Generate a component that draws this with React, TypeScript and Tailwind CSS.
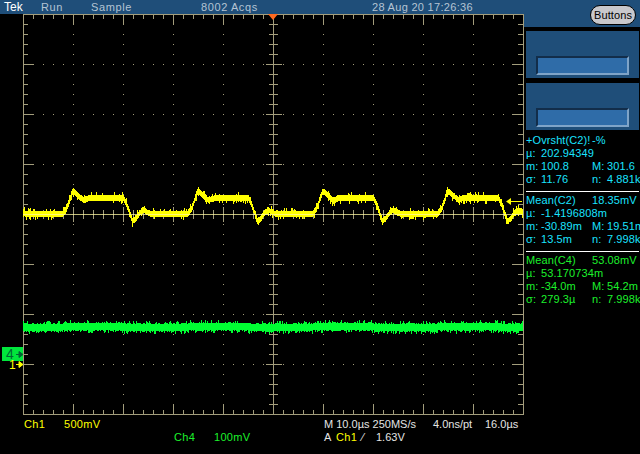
const GRID = "#a39d7c";

// small seeded noise so the trace is the same on every load
function makeNoise(seed: number) {
  let s = seed;
  return () => {
    s = (s * 16807) % 2147483647;
    return s / 2147483647;
  };
}

function lerpPoints(pts: number[][], p: number) {
  for (let i = 1; i < pts.length; i++) {
    if (p <= pts[i][0]) {
      const [x0, y0] = pts[i - 1];
      const [x1, y1] = pts[i];
      return y0 + ((y1 - y0) * (p - x0)) / (x1 - x0);
    }
  }
  return pts[pts.length - 1][1];
}

const pulse = [
  [0, 214], [4, 209], [10, 192], [12, 192], [16, 196], [21, 200], [27, 198], [61, 198],
  [64, 204], [70, 221], [73, 219], [77, 213], [81, 210], [88, 214], [125, 214],
];

function yellowTrace() {
  const r = makeNoise(77);
  let d = "";
  for (let x = 23; x < 523; x++) {
    const p = (((x - 62) % 125) + 125) % 125;
    const c = lerpPoints(pulse, p);
    const top = c - 2.5 - (r() < 0.2 ? 1 + r() * 3 : r());
    const bot = c + 2.5 + (r() < 0.2 ? 1 + r() * 3 : r());
    d += `M${x}.5 ${Math.round(top)}V${Math.round(bot)}`;
  }
  return d;
}

function greenTrace() {
  const r = makeNoise(4242);
  let d = "";
  for (let x = 23; x < 523; x++) {
    const p = (((x - 62) % 125) + 125) % 125;
    const c = 327.5 - (p > 0 && p < 62 ? 0.8 : 0);
    const top = c - 3.5 - (r() < 0.25 ? 1 + r() * 2.5 : r() * 0.8);
    const bot = c + 3.5 + (r() < 0.25 ? 1 + r() * 2.5 : r() * 0.8);
    d += `M${x}.5 ${Math.round(top)}V${Math.round(bot)}`;
  }
  return d;
}

function Graticule() {
  const ticks: string[] = [];
  const dots: string[] = [];
  for (let x = 33; x < 523; x += 10) {
    const major = (x - 23) % 50 === 0;
    ticks.push(`M${x}.5 15V${major ? 25 : 19}`);
    ticks.push(`M${x}.5 414V${major ? 404 : 410}`);
    ticks.push(`M${x}.5 ${major ? 207 : 210}V${major ? 222 : 219}`);
  }
  for (let y = 24; y < 414; y += 10) {
    const major = (y - 14) % 50 === 0;
    ticks.push(`M23 ${y}.5H${major ? 34 : 28}`);
    ticks.push(`M523 ${y}.5H${major ? 512 : 518}`);
    ticks.push(`M${major ? 266 : 269} ${y}.5H${major ? 282 : 278}`);
  }
  for (let gy = 64; gy < 414; gy += 50) {
    if (gy === 214) continue;
    for (let x = 33; x < 523; x += 10) dots.push(`M${x} ${gy}h1v1h-1z`);
  }
  for (let gx = 73; gx < 523; gx += 50) {
    if (gx === 273) continue;
    for (let y = 24; y < 414; y += 10) dots.push(`M${gx} ${y}h1v1h-1z`);
  }
  return (
    <g shapeRendering="crispEdges">
      <path d={dots.join("")} fill={GRID} />
      <path d={ticks.join("")} stroke={GRID} fill="none" />
      <path d="M23.5 14V414.5M23 14.5H523.5M23 414.5H524M523.5 14V414M273.5 14V414" stroke={GRID} fill="none" />
    </g>
  );
}

function Scope() {
  return (
    <svg width="524" height="416" viewBox="0 0 524 416" className="block shrink-0">
      <Graticule />
      <g shapeRendering="crispEdges" fill="none">
        <path d={yellowTrace()} stroke="#ffff00" />
        <path d={greenTrace()} stroke="#00ff33" />
        <path d="M23 214.5H523" stroke="#fff8a0" opacity="0.75" />
        {/* channel 1 ref arrow on the right */}
        <path d="M511 201.5H522" stroke="#ffff00" />
      </g>
      <path d="M506 201.5L511 198V205Z" fill="#ffff00" />
      <path d="M268 14H278L273 20Z" fill="#ff6a1f" />
      {/* channel markers */}
      <rect x="2" y="347" width="21" height="14" fill="#00e63c" />
      <path d="M16 354.5H20M19 351.5L23 354.5L19 357.5Z" stroke="#063" fill="#063" />
      <path d="M16 364.5H20M19 361.5L23 364.5L19 367.5Z" stroke="#ffff00" fill="#ffff00" />
    </svg>
  );
}

type Row = { a: string; b?: string; c?: string; d?: string };

function Readout({ rows, color }: { rows: Row[]; color: string }) {
  return (
    <div className={`px-[2px] ${color}`}>
      {rows.map((r, i) => (
        <div key={i} className="grid grid-cols-[66px_1fr] h-[13px] leading-[13px] whitespace-nowrap">
          <div className="flex">
            <span className="w-[15px] shrink-0">{r.a}</span>
            <span>{r.b}</span>
          </div>
          <div className="flex">
            <span className="w-[15px] shrink-0">{r.c}</span>
            <span>{r.d}</span>
          </div>
        </div>
      ))}
    </div>
  );
}

function HeaderRow({ label, value, color }: { label: string; value: string; color: string }) {
  return (
    <div className={`px-[2px] grid grid-cols-[66px_1fr] h-[13px] leading-[13px] whitespace-nowrap ${color}`}>
      <span>{label}</span>
      <span>{value}</span>
    </div>
  );
}

function SoftBox() {
  return (
    <div className="h-[47px] bg-[#1f4e79] ml-[2px] mr-[1px] pt-[25px] pl-[10px] pr-[10px]">
      <div className="h-[19px] bg-[#2f6ca8] border-t-2 border-l-2 border-[#122d4a] border-r-2 border-b-2 border-r-[#7fa4c8] border-b-[#7fa4c8]" />
    </div>
  );
}

function SidePanel() {
  return (
    <div className="w-[116px] shrink-0 overflow-hidden text-[11px] tracking-[0.1px]">
      <div className="h-[27px] bg-[#1f4e79] flex justify-end pt-[5px] pr-[4px]">
        <div className="w-[46px] h-[20px] rounded-[10px] bg-[#c8c8cc] border border-black flex items-center justify-center text-[11px] text-black">
          Buttons
        </div>
      </div>
      <div className="h-[4px]" />
      <SoftBox />
      <div className="h-[5px]" />
      <SoftBox />
      <div className="h-[4px]" />
      <HeaderRow label="+Ovrsht(C2)!" value="-%" color="text-[#19e3ff]" />
      <Readout
        color="text-[#19e3ff]"
        rows={[
          { a: "µ:", b: "202.94349" },
          { a: "m:", b: "100.8", c: "M:", d: "301.6" },
          { a: "σ:", b: "11.76", c: "n:", d: "4.881k" },
        ]}
      />
      <div className="h-[1px] bg-white mx-[2px] mt-[5px] mb-[2px] mr-[1px]" />
      <HeaderRow label="Mean(C2)" value="18.35mV" color="text-[#19e3ff]" />
      <Readout
        color="text-[#19e3ff]"
        rows={[
          { a: "µ:", b: "-1.4196808m" },
          { a: "m:", b: "-30.89m", c: "M:", d: "19.51m" },
          { a: "σ:", b: "13.5m", c: "n:", d: "7.998k" },
        ]}
      />
      <div className="h-[1px] bg-white mx-[2px] mt-[5px] mb-[2px] mr-[1px]" />
      <HeaderRow label="Mean(C4)" value="53.08mV" color="text-[#1cf02c]" />
      <Readout
        color="text-[#1cf02c]"
        rows={[
          { a: "µ:", b: "53.170734m" },
          { a: "m:", b: "-34.0m", c: "M:", d: "54.2m" },
          { a: "σ:", b: "279.3µ", c: "n:", d: "7.998k" },
        ]}
      />
    </div>
  );
}

export default function App() {
  return (
    <div className="relative w-[640px] h-[454px] overflow-hidden bg-black font-['Liberation_Sans',Arial,sans-serif] text-[11px]">
      {/* top status line */}
      <div className="h-[14px] bg-[#1f4e79] flex items-center text-[#b4c4d4] tracking-[0.6px] leading-[14px] whitespace-nowrap">
        <span className="w-[41px] pl-[4px] text-white text-[12px] tracking-normal">Tek</span>
        <span className="w-[50px]">Run</span>
        <span className="w-[110px]">Sample</span>
        <span className="w-[171px]">8002 Acqs</span>
        <span className="tracking-[0.3px]">28 Aug 20 17:26:36</span>
      </div>

      <div className="flex -mt-[14px]">
        <Scope />
        <SidePanel />
      </div>

      {/* markers that sit on the graticule edge */}
      <span className="absolute left-[6px] top-[347px] text-[14px] leading-[14px] text-[#063]">4</span>
      <span className="absolute left-[9px] top-[359px] text-[12px] leading-[12px] text-[#ffff00]">1</span>

      {/* bottom readouts */}
      <div className="-mt-[2px] pl-[24px] text-[#ffff00] tracking-[0.3px]">
        <div className="flex h-[13px] leading-[13px] mt-[4px] whitespace-nowrap">
          <span className="w-[40px]">Ch1</span>
          <span className="w-[260px]">500mV</span>
          <span className="w-[109px] text-[#e4e4e4] tracking-normal">M 10.0µs 250MS/s</span>
          <span className="w-[52px] text-[#e4e4e4] tracking-normal">4.0ns/pt</span>
          <span className="text-[#e4e4e4] tracking-normal">16.0µs</span>
        </div>
        <div className="flex h-[13px] leading-[13px] whitespace-nowrap">
          <span className="w-[150px]" />
          <span className="w-[40px] text-[#1cf02c]">Ch4</span>
          <span className="w-[110px] text-[#1cf02c]">100mV</span>
          <span className="w-[12px] text-[#e4e4e4]">A</span>
          <span className="w-[26px]">Ch1</span>
          <span className="w-[14px] text-[#e4e4e4]">⁄</span>
          <span className="text-[#e4e4e4] tracking-normal">1.63V</span>
        </div>
      </div>
    </div>
  );
}
